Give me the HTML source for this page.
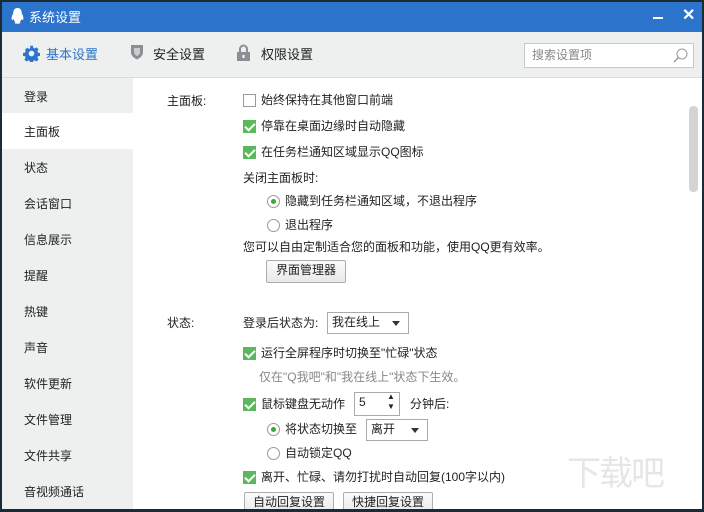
<!DOCTYPE html><html><head><meta charset="utf-8"><style>
*{margin:0;padding:0;box-sizing:border-box}
body{width:704px;height:512px;background:#1a2b33;position:relative;overflow:hidden;font-family:"Liberation Sans","Noto Sans CJK SC",sans-serif;font-size:12px;color:#222}
.win{position:absolute;left:2px;top:2px;width:700px;height:507px;background:#fff;overflow:hidden}
.title{position:absolute;left:0;top:0;width:700px;height:30px;background:#2b73cb;color:#fff;font-size:13px}
.tb{position:absolute;left:0;top:30px;width:700px;height:46px;background:#eef0f0;border-bottom:1px solid #d8dadb}
.side{position:absolute;left:0;top:76px;width:131px;height:440px;background:#eef0f0}
.si{position:absolute;left:22px;font-size:12px;margin-top:-2px}
.a{position:absolute;white-space:nowrap}
span.a{margin-top:-2px}
.cb{position:absolute;width:13px;height:13px;border:1px solid #9a9a9a;background:#fff}
.cb.on{background:#5cb85c;border-color:#5cb85c}
.cb.on:after{content:"";position:absolute;left:3px;top:0px;width:4px;height:8px;border:solid #fff;border-width:0 2px 2px 0;transform:rotate(45deg)}
.rd{position:absolute;width:13px;height:13px;border:1px solid #9a9a9a;border-radius:50%;background:#fff}
.rd.on:after{content:"";position:absolute;left:3px;top:3px;width:5px;height:5px;border-radius:50%;background:#3aa83a}
.btn{position:absolute;height:23px;border:1px solid #adadad;background:linear-gradient(#fbfbfb,#e8e8e8);text-align:center;line-height:19px;border-radius:2px}
.sel{position:absolute;height:22px;border:1px solid #aaa;background:#fff;padding-left:4px;line-height:18px}
.sel:after{content:"";position:absolute;right:8px;top:8px;border:4px solid transparent;border-top:5px solid #333}
.gray{color:#888}
</style></head><body><div class="win">
<div class="title">
<svg style="position:absolute;left:9px;top:6px" width="13" height="17" viewBox="0 0 13 17"><path d="M6.5 0C3 0 2.2 3 2.2 5.5 1 7.5 0 10 1 12c1 0 1.5-1 1.5-1 .3 1.5 1 2.5 2 3-1 .5-1.5 1.2 0 1.5 1.5.3 3 .3 4 0 1.5-.3 1-1 0-1.5 1-.5 1.7-1.5 2-3 0 0 .5 1 1.5 1 1-2 0-4.5-1.2-6.5C10.8 3 10 0 6.5 0z" fill="#fff"/></svg>
<span class="a" style="left:27px;top:7px">系统设置</span>
<div class="a" style="left:651px;top:15px;width:10px;height:2px;background:#fff"></div>
<span class="a" style="left:680px;top:5px;font-size:16px;font-weight:bold">✕</span>
</div>
<div class="tb">
<svg style="position:absolute;left:21px;top:13px" width="17" height="17" viewBox="0 0 24 24"><path fill="#2b73cb" d="M10 1h4l.6 3 2 1 2.6-1.7 2.8 2.8-1.7 2.6.8 2 3 .6v4l-3 .6-.8 2 1.7 2.6-2.8 2.8-2.6-1.7-2 .8-.6 3h-4l-.6-3-2-.8-2.6 1.7-2.8-2.8 1.7-2.6-.8-2-3-.6v-4l3-.6.8-2L3 6.6 5.8 3.8 8.4 5.5l2-1zM12 8a4 4 0 100 8 4 4 0 000-8z"/></svg>
<span class="a" style="left:44px;top:14px;font-size:13px;color:#2b73cb">基本设置</span>
<svg style="position:absolute;left:128px;top:12px" width="14" height="16" viewBox="0 0 14 16"><path d="M1 1h12v7c0 4-3 6-6 7.5C4 14 1 12 1 8z" fill="#8a8f93"/><path d="M4 4h6v4c0 2-1.5 3.3-3 4-1.5-.7-3-2-3-4z" fill="#c9cdd0"/></svg>
<span class="a" style="left:151px;top:14px;font-size:13px">安全设置</span>
<svg style="position:absolute;left:235px;top:12px" width="13" height="17" viewBox="0 0 13 17"><path d="M3 8V5a3.5 3.5 0 017 0v3" stroke="#8a8f93" stroke-width="2" fill="none"/><rect x="0" y="8" width="13" height="9" fill="#8a8f93"/><rect x="5.5" y="11" width="2" height="3" fill="#fff"/></svg>
<span class="a" style="left:259px;top:14px;font-size:13px">权限设置</span>
<div class="a" style="left:522px;top:11px;width:170px;height:25px;border:1px solid #c8c8c8;background:#fff"><span class="a" style="left:7px;top:4px;color:#888">搜索设置项</span>
<svg style="position:absolute;left:148px;top:4px" width="15" height="15" viewBox="0 0 15 15"><circle cx="9" cy="6" r="5" stroke="#999" fill="none"/><path d="M5.5 9.5L1 14" stroke="#999" stroke-width="1.4"/></svg></div>
</div>
<div class="side">
<span class="si" style="top:12px">登录</span>
<div class="a" style="left:0;top:35px;width:131px;height:36px;background:#fff"></div>
<span class="si" style="top:47px">主面板</span>
<span class="si" style="top:83px">状态</span>
<span class="si" style="top:119px">会话窗口</span>
<span class="si" style="top:155px">信息展示</span>
<span class="si" style="top:191px">提醒</span>
<span class="si" style="top:227px">热键</span>
<span class="si" style="top:263px">声音</span>
<span class="si" style="top:299px">软件更新</span>
<span class="si" style="top:335px">文件管理</span>
<span class="si" style="top:371px">文件共享</span>
<span class="si" style="top:407px">音视频通话</span>
</div>
<div class="a" style="left:687px;top:104px;width:9px;height:86px;background:#d4d4d4;border-radius:4px"></div>

<span class="a" style="left:165px;top:92px">主面板:</span>
<div class="cb" style="left:241px;top:92px"></div><span class="a" style="left:259px;top:91px">始终保持在其他窗口前端</span>
<div class="cb on" style="left:241px;top:118px"></div><span class="a" style="left:259px;top:117px">停靠在桌面边缘时自动隐藏</span>
<div class="cb on" style="left:241px;top:144px"></div><span class="a" style="left:259px;top:143px">在任务栏通知区域显示QQ图标</span>
<span class="a" style="left:241px;top:169px">关闭主面板时:</span>
<div class="rd on" style="left:265px;top:193px"></div><span class="a" style="left:283px;top:192px">隐藏到任务栏通知区域，不退出程序</span>
<div class="rd" style="left:265px;top:217px"></div><span class="a" style="left:283px;top:216px">退出程序</span>
<span class="a" style="left:241px;top:238px">您可以自由定制适合您的面板和功能，使用QQ更有效率。</span>
<div class="btn" style="left:264px;top:258px;width:80px">界面管理器</div>

<span class="a" style="left:165px;top:314px">状态:</span>
<span class="a" style="left:241px;top:314px">登录后状态为:</span>
<div class="sel" style="left:325px;top:310px;width:82px">我在线上</div>
<div class="cb on" style="left:241px;top:345px"></div><span class="a" style="left:259px;top:344px">运行全屏程序时切换至"忙碌"状态</span>
<span class="a gray" style="left:257px;top:368px">仅在"Q我吧"和"我在线上"状态下生效。</span>
<div class="cb on" style="left:241px;top:396px"></div><span class="a" style="left:259px;top:395px">鼠标键盘无动作</span>
<div class="a" style="left:352px;top:390px;width:46px;height:24px;border:1px solid #aaa;background:#fff"><span class="a" style="left:4px;top:4px">5</span><span class="a" style="left:32px;top:1px;font-size:8px;line-height:10px">▲<br>▼</span></div>
<span class="a" style="left:408px;top:395px">分钟后:</span>
<div class="rd on" style="left:265px;top:421px"></div><span class="a" style="left:283px;top:420px">将状态切换至</span>
<div class="sel" style="left:364px;top:417px;width:62px">离开</div>
<div class="rd" style="left:265px;top:445px"></div><span class="a" style="left:283px;top:444px">自动锁定QQ</span>
<div class="cb on" style="left:241px;top:469px"></div><span class="a" style="left:259px;top:468px">离开、忙碌、请勿打扰时自动回复(100字以内)</span>
<div class="btn" style="left:242px;top:490px;width:90px">自动回复设置</div>
<div class="btn" style="left:341px;top:490px;width:90px">快捷回复设置</div>
<span class="a" style="left:565px;top:446px;font-size:34px;color:#e6e6e6;letter-spacing:-2px">下载吧</span>
</div></body></html>
